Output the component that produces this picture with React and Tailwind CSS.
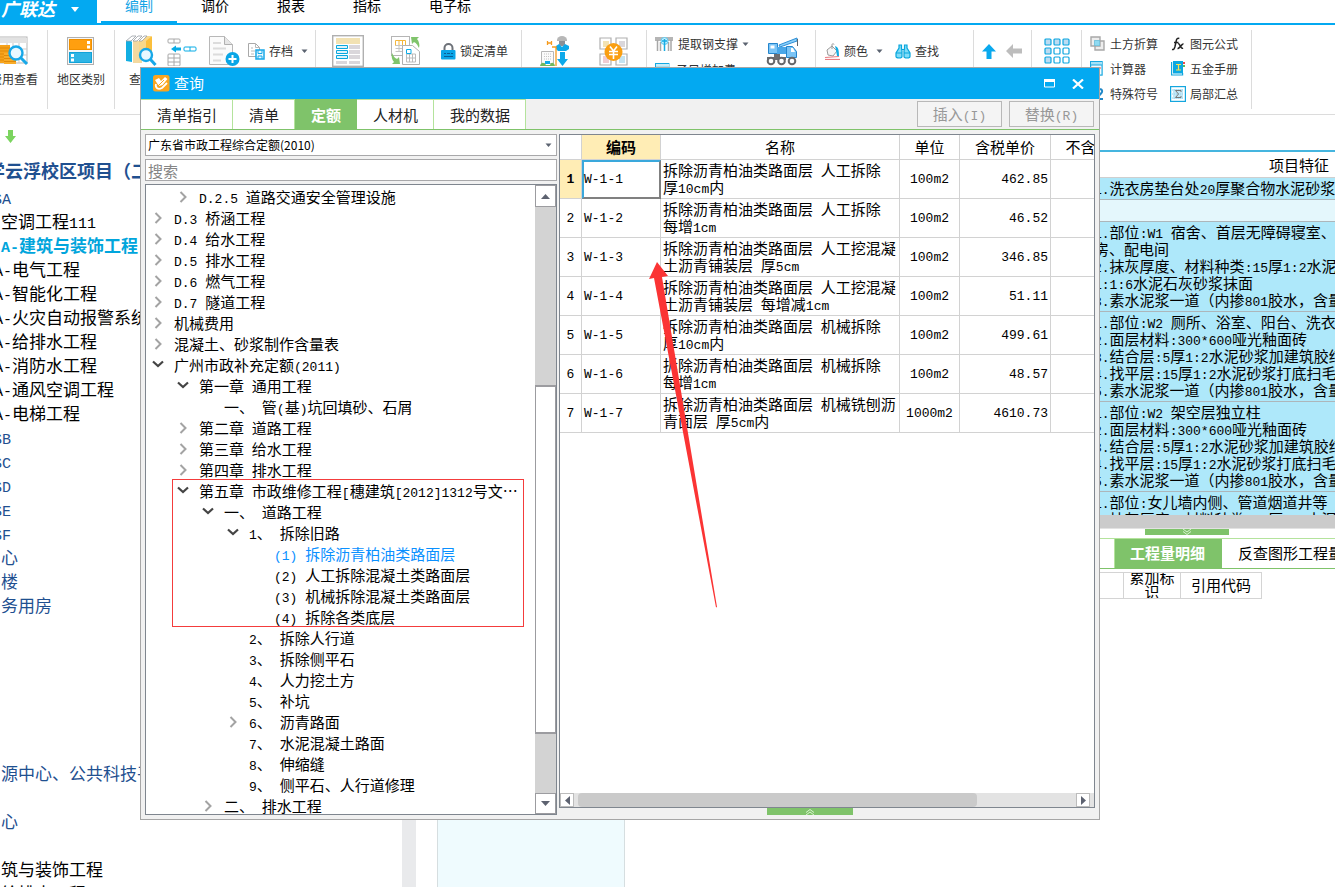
import React from "react";

const CJK = "font-['Noto_Sans_CJK_SC',sans-serif]";

/* Chinese text with its Latin runs set in a narrower monospace face. */
function T({ children, latin = "text-[13px]" }) {
  return children.split(/([\x20-\x7e]+)/).map((part, i) =>
    i % 2 ? (
      <span key={i} className={`font-['Liberation_Mono',monospace] leading-[0] ${latin}`}>{part}</span>
    ) : (
      part
    )
  );
}

function Caret({ className = "text-[#5b6370]" }) {
  return (
    <svg width="7" height="4" viewBox="0 0 7 4" className={`shrink-0 ${className}`} fill="currentColor">
      <path d="M0.5 0.5h6L3.5 4z" />
    </svg>
  );
}

/* ---------- ribbon icons ---------- */

const CostIcon = () => (
  <svg width="30" height="30" viewBox="0 0 30 30" fill="none">
    <rect x="-6" y="2" width="34" height="26" fill="#fff" stroke="#b5b5b5" />
    <path d="M-6 3h34v5h-34z" fill="#e2e2e2" />
    <path d="M-6 14h34M-6 20h34M8 8v20M14 8v20M20 8v20" stroke="#c9c9c9" />
    <path d="M0 10h11v18h-11z" fill="#f6a21b" />
    <path d="M0 13h11M0 16h11M0 19h11M0 22h11M0 25h11" stroke="#e08a08" />
    <path d="M5 18h12v11H5z" fill="#f8ab28" />
    <path d="M5 20.500h12M5 23.500h12M5 26.500h12" stroke="#e08a08" />
    <circle cx="17" cy="18" r="6.500" fill="#e9f8ff" stroke="#18a8e8" strokeWidth="2.400" />
    <path d="M21.500 22.500L28 29" stroke="#18a8e8" strokeWidth="3" />
  </svg>
);

const RegionIcon = () => (
  <svg width="27" height="30" viewBox="0 0 27 30" fill="none">
    <rect x=".5" y="2.500" width="26" height="27" fill="#f7f7f7" stroke="#b0b0b0" />
    <rect x="2.500" y="4.500" width="22" height="10" fill="#ff9f0f" stroke="#f09000" />
    <path d="M20 6h3v3h-3zM20 10.500h3v3h-3z" fill="#fff" />
    <rect x="2.500" y="17.500" width="22" height="10" fill="#2fb5e5" stroke="#12a2d8" />
    <path d="M4 19h3v3H4zM4 23.500h3v3H4z" fill="#fff" />
  </svg>
);

const BooksIcon = () => (
  <svg width="32" height="32" viewBox="0 0 32 32" fill="none">
    <path d="M1 6h5l1 1v20l-6-1z" fill="#12aee2" />
    <path d="M1 6l6-5h4L6 6z" fill="#fff" stroke="#9aa0a5" strokeWidth=".8" />
    <path d="M8 6h9v22H8z" fill="#f3d9a0" />
    <path d="M8 6l5-5h4l-5 5z" fill="#fff" stroke="#9aa0a5" strokeWidth=".8" />
    <path d="M14 6l5-5h7v24H14z" fill="#f8d88a" />
    <path d="M14 6l5-5h3l-5 5z" fill="#fff" stroke="#9aa0a5" strokeWidth=".8" />
    <path d="M21 6l6-5v22h-6z" fill="#fbbf3c" />
    <circle cx="21" cy="20" r="6" fill="#e9f8ff" stroke="#18a8e8" strokeWidth="2.400" />
    <path d="M25.500 24.500l5 5.500" stroke="#18a8e8" strokeWidth="3" />
  </svg>
);

const InsertRowIcon = () => (
  <svg width="30" height="30" viewBox="0 0 30 30" fill="none">
    <g stroke="#a8a8a8">
      <rect x="1" y="3" width="12" height="4" rx="1" />
      <path d="M7 3v4" />
      <rect x="1" y="18" width="12" height="12" rx="1" />
      <path d="M1 22h12M1 26h12M7 18v12" />
    </g>
    <path d="M4 13l5-3.500v2h5v3H9v2z" fill="#08ace6" />
    <rect x="17" y="11" width="12" height="4" rx="1" stroke="#08ace6" />
    <path d="M23 11v4" stroke="#08ace6" />
  </svg>
);

const NewDocIcon = () => (
  <svg width="31" height="32" viewBox="0 0 31 32" fill="none">
    <path d="M.5 1.500h15l8 8v20H.5z" fill="#fbfbfb" stroke="#b8b8b8" />
    <path d="M15.500 1.500v8h8" fill="#e6e6e6" stroke="#b0b0b0" />
    <path d="M4 8h8M4 13.500h13M4 19.500h10M4 25.500h8" stroke="#dcdcdc" strokeWidth="2" />
    <circle cx="23.500" cy="24" r="7" fill="#0aa6e6" />
    <path d="M23.500 20v8M19.500 24h8" stroke="#fff" strokeWidth="2" />
  </svg>
);

const ArchiveIcon = () => (
  <svg width="17" height="18" viewBox="0 0 17 18" fill="none">
    <path d="M.5 1.500h7l4 4v9H.5z" fill="#fff" stroke="#a9a9a9" />
    <path d="M7.500 1.500v4h4M3 6h2M3 9h4M3 12h3" stroke="#b9b9b9" />
    <rect x="8" y="8" width="8" height="9" fill="#e9f8ff" stroke="#18a8e8" strokeWidth="1.500" />
    <path d="M10 8v3.500h4V8M10 17v-3h4v3" stroke="#18a8e8" />
  </svg>
);

const FormIcon = () => (
  <svg width="32" height="32" viewBox="0 0 32 32" fill="none">
    <rect x=".7" y=".7" width="30.600" height="30.600" fill="#fff" stroke="#b0b0b0" strokeWidth="1.400" />
    <path d="M4 3h24v6H4z" fill="#f2e2b3" />
    <path d="M17 10h11v4H17zM17 15h11v4H17zM17 20h11v4H17zM4 26h11v3H4zM17 26h11v3H17z" fill="#dad7db" />
    <path d="M4.500 10.500h11v3h-11zM4.500 15.500h11v3h-11zM4.500 20.500h11v3h-11z" fill="#dff3fb" stroke="#0aa9dd" />
  </svg>
);

const SwapIcon = () => (
  <svg width="30" height="32" viewBox="0 0 30 32" fill="none">
    <rect x=".5" y="1.500" width="18" height="19" fill="#fff" stroke="#b5b5b5" />
    <path d="M4.500 5.500h10v5h-10zM8 5.500v5M11.500 5.500v5" stroke="#f4b73c" />
    <path d="M4.500 10.500h10v6h-10M4.500 13.500h10M8 10.500v6" stroke="#c4c4c4" />
    <path d="M11.500 10.500h10l7 6v13h-17z" fill="#fff" stroke="#b0b0b0" />
    <path d="M15.500 19h9v8h-9zM15.500 23h9M18.500 19v8M21.500 19v8" stroke="#bcbcbc" />
    <path d="M15.500 14.500h4.500v4h-4.500z" stroke="#0aace6" />
    <path d="M20 2h8l-2 2c2 2 3 6 2 9-2-4-3-5-5-6l-2 2z" fill="#80c46c" />
    <path d="M9 29H1l2-2c-2-2-3-6-2-9 2 4 3 5 5 6l2-2z" fill="#80c46c" />
  </svg>
);

const LockIcon = () => (
  <svg width="15" height="17" viewBox="0 0 15 17" fill="none">
    <path d="M3.500 8V5a4 4 0 018 0v3" stroke="#6d7178" strokeWidth="2" />
    <rect x="0" y="7" width="14.500" height="9.500" rx="1" fill="#0aa5e8" />
    <path d="M3 10.500h2M6 10.500h3M10 10.500h2M3 13.500h9" stroke="#075f98" />
  </svg>
);

const WorkerIcon = () => (
  <svg width="30" height="31" viewBox="0 0 30 31" fill="none">
    <path d="M17 4a5 4 0 0110 0v1H17z" fill="#b7b7b7" />
    <path d="M19 5h6v3a3 2 0 01-6 0z" fill="#8c9096" />
    <path d="M16 10l3-2 3 3 3-3 4 2v3l-3 2h-8l-2-2z" fill="#0ea9ea" />
    <path d="M20 16h5v7h3l-5.500 7-5.500-7h3z" fill="#0ea9ea" />
    <path d="M7.500 5v4M7.500 7h4M11.500 5v4M12 11h4v19" stroke="#f59a1d" strokeWidth="1.300" />
    <path d="M1.500 15.500h12v12h-12z" fill="#fafafa" stroke="#b5b5b5" />
    <path d="M4 18h8M4 20.500h8M4 23h8" stroke="#c4c4c4" strokeDasharray="1 1" />
    <path d="M0 30c1-4 4-4 6-1h4c1-3 4-3 5 1z" fill="#72b95c" />
    <path d="M5 25h5v3H5z" fill="#0ea9ea" />
  </svg>
);

const PriceIcon = () => (
  <svg width="30" height="31" viewBox="0 0 30 31" fill="none">
    <g stroke="#b0b0b0" strokeWidth="1.200">
      <path d="M1 2h11v11H1zM17 2h11v11H17zM1 18h11v11H1zM17 18h11v11H17z" fill="#fff" />
    </g>
    <path d="M4 5h6v6H4z" fill="#f2e2b3" />
    <path d="M20 5h6v6h-6z" fill="#dad7db" />
    <path d="M4 20h6v7H4z" fill="#f0cdd2" />
    <path d="M20 20h6v7h-6z" fill="#c4e3f1" />
    <circle cx="14.500" cy="16" r="9" fill="#fa9f12" />
    <path d="M11 10.500l3.500 4.500 3.500-4.500M10 15.500h9M10 18.500h9M14.500 15v8" stroke="#fff" strokeWidth="1.600" />
  </svg>
);

const SupportIcon = () => (
  <svg width="19" height="16" viewBox="0 0 19 16" fill="none">
    <path d="M0 1h18v4H0z" fill="#b5b5b5" />
    <path d="M2.500 4v11M5.500 6v9M13.500 6v9M16 4v11" stroke="#a8a8a8" strokeWidth="1.500" />
    <circle cx="9.500" cy="5" r="3.500" fill="#c7eefc" stroke="#5ccbf2" />
    <path d="M9.500 3v12M7 5h5" stroke="#16ace4" strokeWidth="1.500" />
  </svg>
);

const FeeIcon = () => (
  <svg width="15" height="14" viewBox="0 0 15 14" fill="none">
    <rect x=".7" y=".7" width="13" height="12" fill="#fff" stroke="#16a8e0" strokeWidth="1.400" />
    <path d="M1 1h13v4H1z" fill="#c8edf9" />
    <path d="M1 4.500h13" stroke="#16a8e0" strokeWidth="1.400" />
  </svg>
);

const CraneIcon = () => (
  <svg width="33" height="30" viewBox="0 0 33 30" fill="none">
    <path d="M13 9L31 2v3L14 11z" fill="#8cd0fa" stroke="#2d8fd6" />
    <path d="M31.500 3v7" stroke="#5c6670" />
    <path d="M2.500 7.500h9v10h-9z" fill="#7ac4f6" stroke="#2585cc" />
    <path d="M4.500 9.500h4v3h-4z" fill="#fff" />
    <path d="M11 11h9v7h-9z" fill="#4aa7e8" />
    <path d="M20.500 10.500h6l4 5v6h-10z" fill="#7ac4f6" stroke="#2585cc" />
    <path d="M25 12h2l2 4h-4z" fill="#fff" />
    <path d="M8 18h6v3H8zM1 21h19v3H1z" fill="#6d6d70" />
    <g fill="#fff" stroke="#67676a" strokeWidth="2">
      <circle cx="5" cy="25" r="3.300" />
      <circle cx="15.500" cy="25" r="3.300" />
      <circle cx="26" cy="25" r="3.300" />
    </g>
  </svg>
);

const PaintIcon = () => (
  <svg width="17" height="17" viewBox="0 0 17 17" fill="none">
    <path d="M3 7l5-4 5 5-4 5-5-1z" fill="#f6f6f6" stroke="#9a9a9a" />
    <path d="M8 6V1.500c0-1 2-1 2 0" stroke="#9a9a9a" />
    <path d="M11 3c3 1 4 3 4 10h-2l-1-6z" fill="#12abe2" />
    <path d="M1 14.500l14-1" stroke="#e87b80" strokeWidth="1.200" />
    <path d="M1 16.500h15" stroke="#e87b80" strokeWidth="1.200" />
  </svg>
);

const BinocularsIcon = () => (
  <svg width="16" height="15" viewBox="0 0 16 15" fill="none" stroke="#08a6dc" strokeWidth="1.200">
    <path d="M4 1h2.500v3L7 7v5.500c0 2-6 2-6 0V9l3-5z" fill="#7fdcf8" />
    <path d="M12 1H9.500v3L9 7v5.500c0 2 6 2 6 0V9l-3-5z" fill="#7fdcf8" />
    <path d="M6.500 5.500h3M1 9h6M9 9h6" />
  </svg>
);

const UpIcon = () => (
  <svg width="14" height="15" viewBox="0 0 14 15" fill="#0aa9ee">
    <path d="M7 0l7 7.500H9.500V15h-5V7.500H0z" />
  </svg>
);

const BackIcon = () => (
  <svg width="16" height="14" viewBox="0 0 16 14" fill="#bdbdbd">
    <path d="M0 7l7-7v4.500h9v5H7V14z" />
  </svg>
);

const GridIcon = () => (
  <svg width="26" height="26" viewBox="0 0 26 26" stroke="#0aa6e0" strokeWidth="1.200">
    {[1, 10, 19].map((y, r) =>
      [1, 10, 19].map((x, c) => (
        <rect key={x + "-" + y} x={x} y={y} width="6" height="6" rx="1" fill={r === 0 || c === 0 ? "#bcdcf2" : "#fff"} />
      ))
    )}
  </svg>
);

const EarthIcon = () => (
  <svg width="15" height="15" viewBox="0 0 15 15" fill="none">
    <path d="M1 1h9v9H1zM5 5h9v9H5z" fill="#ededed" stroke="#a8a8a8" strokeWidth="1.400" />
    <path d="M4.500 4.500h5v5h-5z" fill="#8edaf2" stroke="#4cc0e6" strokeDasharray="1 1" />
  </svg>
);

const CalcIcon = () => (
  <svg width="13" height="15" viewBox="0 0 13 15" fill="none">
    <rect x=".6" y=".6" width="11.500" height="13.500" fill="#f4fbfe" stroke="#18a8e0" strokeWidth="1.200" />
    <path d="M1 1h11v3H1z" fill="#a5e2f7" />
    <path d="M0 4h12" stroke="#18a8e0" />
    <path d="M8 6h3v2H8z" fill="#f6a2a2" />
  </svg>
);

const OmegaIcon = () => (
  <svg width="14" height="14" viewBox="0 0 14 14" fill="none" stroke="#2088c8" strokeWidth="2">
    <path d="M8 4c1-3 5-2 4 1-1 2-4 4-5 7h6" />
  </svg>
);

const FxIcon = () => (
  <svg width="14" height="14" viewBox="0 0 14 14" fill="none" stroke="#222" strokeWidth="1.500">
    <path d="M1 12.500c2 .5 2.500-1 3-3l1.300-6c.4-2 1.200-2.500 3-2M3 5.500h4.500" />
    <path d="M7 7c2-1.500 2.500 5.500 5 4M12.500 7c-2-.5-3.500 5-6 4.500" />
  </svg>
);

const HandbookIcon = () => (
  <svg width="14" height="15" viewBox="0 0 14 15" fill="none">
    <path d="M.6 1v13h11v-2" stroke="#12a6dc" strokeWidth="1.200" />
    <path d="M2 0h10v12.500H2z" fill="#0ba8e2" />
    <path d="M5 3.500h5M7.500 3.500v5.500M5 9h5" stroke="#ffe14a" strokeWidth="1.200" />
    <path d="M12 1h2v2h-2z" fill="#ef4b4b" />
    <path d="M12 4h2v2h-2z" fill="#5cba5a" />
  </svg>
);

const SumIcon = () => (
  <svg width="16" height="16" viewBox="0 0 16 16" fill="none">
    <rect x=".6" y=".6" width="14.800" height="14.800" fill="#fff" stroke="#14a6de" strokeWidth="1.200" />
    <path d="M3 3h10v10H3z" fill="#c3e7f6" />
    <path d="M2 4h12M2 8h12M2 12h12" stroke="#93d6f0" strokeDasharray="1 1" />
    <path d="M11 6V4.500H5.500L8.500 8l-3 3.500H11V10" stroke="#787878" />
  </svg>
);

/* ---------- page furniture ---------- */

const menus = ["调价", "报表", "指标"];

function Header() {
  return (
    <header className="flex h-[25px] shrink-0 border-b-2 border-[#03a9f1]">
      <button className="flex h-full w-[97px] shrink-0 items-start bg-[#03a9f1] pl-px text-[18px] font-bold leading-4 text-white italic">
        广联达
        <svg width="8" height="5" viewBox="0 0 8 5" className="mt-[7px] ml-4" fill="#fff"><path d="M0 0h8L4 5z" /></svg>
      </button>
      <nav className="-mt-[5px] ml-1 flex text-[14px] leading-5">
        <button className="flex h-[30px] w-[76px] justify-center border-b-4 border-[#03a9f1] text-[#18a5e6]">编制</button>
        {menus.map((m) => (
          <button key={m} className="flex w-[76px] justify-center text-black">{m}</button>
        ))}
        <button className="flex w-[90px] justify-center text-black">电子标</button>
      </nav>
    </header>
  );
}

function Group({ className = "", children }) {
  return <div className={`flex h-[79px] shrink-0 border-r border-[#dcdcdc] pt-[5px] ${className}`}>{children}</div>;
}

function Tool({ icon, label, caret, className = "" }) {
  return (
    <button className={`flex h-8 shrink-0 items-center whitespace-nowrap ${className}`} aria-label={label || "工具"}>
      {icon}
      {label && <span>{label}</span>}
      {caret && <Caret className="ml-1 text-[#5b6370]" />}
    </button>
  );
}

function Ribbon() {
  return (
    <div className="flex h-[90px] shrink-0 items-start border-b border-[#dcdcdc] pt-[5px] text-[12px] leading-[18px] text-[#333]">
      <Group className="w-12">
        <button className="-ml-2.5 flex h-14 w-12 shrink-0 flex-col items-center whitespace-nowrap">
          <CostIcon /><span className="mt-[5px]">费用查看</span>
        </button>
      </Group>
      <Group className="w-[67px] justify-center">
        <button className="flex h-14 flex-col items-center">
          <RegionIcon /><span className="mt-[5px]">地区类别</span>
        </button>
      </Group>
      <Group className="w-[201px] pl-2.5">
        <button className="flex h-14 w-8 flex-col items-center">
          <BooksIcon /><span className="mt-[3px]">查询</span>
        </button>
        <Tool icon={<InsertRowIcon />} className="ml-2.5" />
        <Tool icon={<NewDocIcon />} className="ml-3" />
        <Tool icon={<ArchiveIcon />} label="存档" caret className="ml-2 gap-1" />
      </Group>
      <Group className="w-[206px] pl-4">
        <Tool icon={<FormIcon />} />
        <Tool icon={<SwapIcon />} className="ml-[27px]" />
        <Tool icon={<LockIcon />} label="锁定清单" className="ml-5 gap-1" />
      </Group>
      <Group className="w-[125px] gap-[29px] pl-[18px]">
        <Tool icon={<WorkerIcon />} />
        <Tool icon={<PriceIcon />} />
      </Group>
      <Group className="w-[169px] pl-2">
        <div className="flex w-[111px] flex-col">
          <button className="flex h-[22px] shrink-0 items-center gap-1 whitespace-nowrap pb-1"><SupportIcon />提取钢支撑<Caret /></button>
          <button className="flex h-[25px] shrink-0 items-center gap-1.5 whitespace-nowrap"><FeeIcon />子目增加费</button>
        </div>
        <Tool icon={<CraneIcon />} />
      </Group>
      <Group className="w-[158px] pl-2">
        <Tool icon={<PaintIcon />} label="颜色" className="gap-[3px]" />
        <span className="flex h-8 items-center pl-2"><Caret /></span>
        <Tool icon={<BinocularsIcon />} label="查找" className="ml-3 gap-1" />
      </Group>
      <Group className="w-[58px] gap-2.5 pl-2">
        <Tool icon={<UpIcon />} />
        <Tool icon={<BackIcon />} />
      </Group>
      <Group className="w-[50px] justify-center">
        <Tool icon={<GridIcon />} />
      </Group>
      <Group className="w-[170px] gap-3 pl-2">
        <div className="-mt-1 flex flex-col">
          <button className="flex h-[25px] items-center gap-1"><span className="w-4"><EarthIcon /></span>土方折算</button>
          <button className="flex h-[25px] items-center gap-1"><span className="w-4"><CalcIcon /></span>计算器</button>
          <button className="flex h-[25px] items-center gap-1"><span className="w-4"><OmegaIcon /></span>特殊符号</button>
        </div>
        <div className="-mt-1 flex flex-col">
          <button className="flex h-[25px] items-center gap-1"><span className="flex w-4 justify-center"><FxIcon /></span>图元公式</button>
          <button className="flex h-[25px] items-center gap-1"><span className="flex w-4 justify-center"><HandbookIcon /></span>五金手册</button>
          <button className="flex h-[25px] items-center gap-1"><span className="flex w-4 justify-center"><SumIcon /></span>局部汇总</button>
        </div>
      </Group>
    </div>
  );
}

const project = [
  ["SA", "b", 1], ["空调工程111", "k", 2], ["A-建筑与装饰工程", "c", 2],
  ["SA-电气工程", "k", 0], ["SA-智能化工程", "k", 0], ["SA-火灾自动报警系统", "k", 0],
  ["SA-给排水工程", "k", 0], ["SA-消防水工程", "k", 0], ["SA-通风空调工程", "k", 0], ["SA-电梯工程", "k", 0],
  ["SB", "b", 1], ["SC", "b", 1], ["SD", "b", 1], ["SE", "b", 1], ["SF", "b", 1],
  ["心", "b", 2], ["楼", "b", 2], ["务用房", "b", 2],
  ["", "b", 2], ["", "b", 2], ["", "b", 2], ["", "b", 2], ["", "b", 2], ["", "b", 2],
  ["源中心、公共科技平台", "b", 2], ["", "b", 2], ["心", "b", 2], ["", "b", 2],
  ["筑与装饰工程", "k", 2], ["给排水工程", "k", 2],
];
const tone = { b: "text-[#1f5090]", k: "text-black", c: "font-bold text-[#00a5dc]" };
const shift = ["pl-0", "pl-2", "pl-4"];

function ProjectPanel() {
  return (
    <aside className="w-[402px] shrink-0 overflow-hidden">
      <div className="flex h-11 items-start pt-[15px] pl-[5px]">
        <svg width="11" height="13" viewBox="0 0 11 13" fill="#7bd45f"><path d="M3 0h5v6h3l-5.500 7L0 6h3z" /></svg>
      </div>
      <div className="-ml-[15px] whitespace-nowrap">
        <h2 className="h-[26px] pl-0.5 text-[18px] leading-[22px] font-bold text-[#1f5090]">学云浮校区项目（二期）</h2>
        <ul className="text-[17px] leading-6">
          {project.map(([t, c, s], i) => (
            <li key={i} className={`h-6 ${tone[c]} ${shift[s]}`}><T latin="text-[15px]">{t}</T></li>
          ))}
        </ul>
      </div>
    </aside>
  );
}

const features = [
  ["1.洗衣房垫台处20厚聚合物水泥砂浆"],
  [" "],
  ["1.部位:W1 宿舍、首层无障碍寝室、厨", "房、配电间", "2.抹灰厚度、材料种类:15厚1:2水泥砂", "1:1:6水泥石灰砂浆抹面", "3.素水泥浆一道（内掺801胶水，含量"],
  ["1.部位:W2 厕所、浴室、阳台、洗衣房", "2.面层材料:300*600哑光釉面砖", "3.结合层:5厚1:2水泥砂浆加建筑胶结", "4.找平层:15厚1:2水泥砂浆打底扫毛", "5.素水泥浆一道（内掺801胶水，含量"],
  ["1.部位:W2 架空层独立柱", "2.面层材料:300*600哑光釉面砖", "3.结合层:5厚1:2水泥砂浆加建筑胶结", "4.找平层:15厚1:2水泥砂浆打底扫毛", "5.素水泥浆一道（内掺801胶水，含量"],
  ["1.部位:女儿墙内侧、管道烟道井等", "2.抹灰厚度、材料种类:15厚1:2水泥砂"],
];

function WorkPanel() {
  return (
    <main className="flex min-w-0 flex-1 flex-col overflow-hidden">
      <div className="h-[35px] shrink-0" />
      <div className="h-[365px] shrink-0 overflow-hidden border-t-2 border-[#45b5df]">
        <table className="w-[1090px] table-fixed border-separate border-spacing-0 text-[15px] leading-[17px] whitespace-pre">
          <colgroup><col className="w-[676px]" /><col /></colgroup>
          <thead>
            <tr className="h-[26px]">
              <th className="border-b border-[#cfcfcf]" />
              <th className="border-b border-[#cfcfcf] text-center font-normal">项目特征</th>
            </tr>
          </thead>
          <tbody>
            {features.map((lines, i) => (
              <tr key={i} className={i === 1 ? "bg-[#e4f7fc]" : "bg-[#aee8fa]"}>
                <td className="border-b border-[#adb6ba]" />
                <td className="border-b border-[#adb6ba] px-0.5 pt-px pb-[3px]">
                  {lines.map((l, j) => <div key={j} className="h-[17px]"><T>{l}</T></div>)}
                </td>
              </tr>
            ))}
          </tbody>
        </table>
      </div>
      <div className="h-[14px] shrink-0 border-b border-[#e2e2e2] bg-[#cbcbcb]" />
      <div className="flex h-[9px] shrink-0 pl-[729px]">
        <button aria-label="收起" className="flex h-1.5 w-[84px] items-center justify-center bg-[#7fc36a]">
          <svg width="10" height="6" viewBox="0 0 10 6" fill="none" stroke="#d9f2cf"><path d="M1 0l4 3 4-3M1 2.500l4 3 4-3" /></svg>
        </button>
      </div>
      <div className="flex h-[31px] shrink-0 border-t border-b border-t-[#b4e39c] border-b-[#7fc36a] pl-[698px] text-[15px] whitespace-nowrap">
        <button className="w-[108px] shrink-0 border-l border-[#b4e39c] bg-[#7fc36a] pr-0.5 pb-px font-bold leading-6 text-white">工程量明细</button>
        <button className="shrink-0 px-4 pb-px leading-6">反查图形工程量</button>
      </div>
      <div className="flex shrink-0 pt-[3px] text-[15px] leading-[15px]">
        <div className="h-[27px] w-[708px] shrink-0 border border-[#d4d4d4]" />
        <div className="flex h-[27px] w-[57px] shrink-0 items-center justify-center overflow-hidden border-y border-r border-[#d4d4d4] px-1 pb-1 text-center">累加标识</div>
        <div className="flex h-[27px] w-[81px] shrink-0 items-center justify-center border-y border-r border-[#d4d4d4] pb-0.5">引用代码</div>
      </div>
      <div className="flex min-h-0 flex-1 pl-[21px]">
        <div className="w-[188px] border-x border-[#d6dee0] bg-[#effbfe]" />
      </div>
    </main>
  );
}

/* ---------- query dialog ---------- */

const tree = [
  [1, ">", "D.2.5 道路交通安全管理设施"], [0, ">", "D.3 桥涵工程"], [0, ">", "D.4 给水工程"],
  [0, ">", "D.5 排水工程"], [0, ">", "D.6 燃气工程"], [0, ">", "D.7 隧道工程"],
  [0, ">", "机械费用"], [0, ">", "混凝土、砂浆制作含量表"], [0, "v", "广州市政补充定额(2011)"],
  [1, "v", "第一章 通用工程"], [2, "", "一、 管(基)坑回填砂、石屑"], [1, ">", "第二章 道路工程"],
  [1, ">", "第三章 给水工程"], [1, ">", "第四章 排水工程"],
  [1, "v", "第五章 市政维修工程[穗建筑[2012]1312号文…"], [2, "v", "一、 道路工程"],
  [3, "v", "1、 拆除旧路"], [4, "", "(1) 拆除沥青柏油类路面层"], [4, "", "(2) 人工拆除混凝土类路面层"],
  [4, "", "(3) 机械拆除混凝土类路面层"], [4, "", "(4) 拆除各类底层"], [3, "", "2、 拆除人行道"],
  [3, "", "3、 拆除侧平石"], [3, "", "4、 人力挖土方"], [3, "", "5、 补坑"],
  [3, ">", "6、 沥青路面"], [3, "", "7、 水泥混凝土路面"], [3, "", "8、 伸缩缝"],
  [3, "", "9、 侧平石、人行道修理"], [2, ">", "二、 排水工程"],
];
const indent = ["pl-1", "pl-[29px]", "pl-[54px]", "pl-[79px]", "pl-[104px]"];

function Twisty({ kind }) {
  return (
    <span className="flex w-4 shrink-0 justify-center">
      {kind === ">" && (
        <svg width="9" height="12" viewBox="0 0 9 12" fill="none" stroke="#a3a3a3" strokeWidth="2"><path d="M1.500 1l5 5-5 5" /></svg>
      )}
      {kind === "v" && (
        <svg width="12" height="9" viewBox="0 0 12 9" fill="none" stroke="#444" strokeWidth="2.200"><path d="M1 1.500l5 4.500 5-4.500" /></svg>
      )}
    </span>
  );
}

function QuotaTree() {
  return (
    <div className="flex min-h-0 flex-1 border border-[#7f868f] bg-white">
      <ul className="min-w-0 flex-1 overflow-hidden pt-px text-[15px] leading-[21px]">
        {tree.map(([lv, kind, t], i) => (
          <li key={i} className={`flex h-[21px] items-center gap-2 whitespace-pre ${indent[lv]} ${i === 17 ? "text-[#0a90ff]" : "text-black"}`}>
            <Twisty kind={kind} />
            <span><T>{t}</T></span>
          </li>
        ))}
      </ul>
      <div className="flex w-[21px] shrink-0 flex-col bg-[#d3d3d3]">
        <button aria-label="向上" className="flex h-[22px] items-center justify-center border border-[#9c9ca0] bg-white">
          <svg width="9" height="5" viewBox="0 0 9 5" fill="#5d6270"><path d="M0 5h9L4.500 0z" /></svg>
        </button>
        <div className="mt-[178px] h-[349px] border border-t-2 border-b-2 border-[#9c9ca0] bg-white" />
        <button aria-label="向下" className="mt-auto flex h-[21px] items-center justify-center border border-[#9c9ca0] bg-white">
          <svg width="9" height="5" viewBox="0 0 9 5" fill="#5d6270"><path d="M0 0h9L4.500 5z" /></svg>
        </button>
      </div>
    </div>
  );
}

const items = [
  ["W-1-1", "拆除沥青柏油类路面层 人工拆除\n厚10cm内", "100m2", "462.85"],
  ["W-1-2", "拆除沥青柏油类路面层 人工拆除\n每增1cm", "100m2", "46.52"],
  ["W-1-3", "拆除沥青柏油类路面层 人工挖混凝\n土沥青铺装层 厚5cm", "100m2", "346.85"],
  ["W-1-4", "拆除沥青柏油类路面层 人工挖混凝\n土沥青铺装层 每增减1cm", "100m2", "51.11"],
  ["W-1-5", "拆除沥青柏油类路面层 机械拆除\n厚10cm内", "100m2", "499.61"],
  ["W-1-6", "拆除沥青柏油类路面层 机械拆除\n每增1cm", "100m2", "48.57"],
  ["W-1-7", "拆除沥青柏油类路面层 机械铣刨沥\n青面层 厚5cm内", "1000m2", "4610.73"],
];
const cell = "border-r border-b border-[#d2d2d2]";
const mono = "font-['Liberation_Mono',monospace] text-[13px]";

function QuotaGrid() {
  return (
    <div className="flex min-h-0 flex-1 flex-col overflow-hidden border border-[#7f868f] bg-white">
      <div className="min-h-0 flex-1 overflow-hidden">
        <table className="w-[596px] table-fixed border-separate border-spacing-0 text-[15px] leading-[17px]">
          <colgroup>
            <col className="w-[22px]" /><col className="w-[79px]" /><col className="w-[239px]" />
            <col className="w-[60px]" /><col className="w-[91px]" /><col className="w-[105px]" />
          </colgroup>
          <thead>
            <tr className="h-[25px]">
              <th className={cell} />
              <th className={`${cell} bg-[#ffedb5] px-0 pt-0 pb-0.5 font-bold`}>编码</th>
              {["名称", "单位", "含税单价", "不含税单价"].map((h) => (
                <th key={h} className={`${cell} px-0 pt-0 pb-0.5 font-normal`}>{h}</th>
              ))}
            </tr>
          </thead>
          <tbody>
            {items.map(([code, name, unit, price], i) => (
              <tr key={code} className="h-[39px]">
                <th className={`${cell} ${mono} p-0 ${i === 0 ? "bg-[#ffedb5] font-bold" : "font-normal"}`}>{i + 1}</th>
                <td className={`${mono} py-0 pr-0 ${i === 0 ? "border-2 border-t-[#3aa8dc] border-r-[#808080] border-b-[#808080] border-l-[#3aa8dc] pl-0" : cell + " pl-0.5"}`}>{code}</td>
                <td className={`${cell} pt-0 pr-0 pb-0.5 pl-0.5 whitespace-pre`}><T>{name}</T></td>
                <td className={`${cell} ${mono} p-0 text-center`}>{unit}</td>
                <td className={`${cell} ${mono} py-0 pr-0.5 pl-0 text-right`}>{price}</td>
                <td className={cell} />
              </tr>
            ))}
          </tbody>
        </table>
      </div>
      <div className="flex h-[14px] shrink-0 bg-[#e3e3e3] pr-1">
        <button aria-label="向左" className="flex w-[14px] items-center justify-center border border-[#bcbcbc] bg-white">
          <svg width="5" height="9" viewBox="0 0 5 9" fill="#5d6270"><path d="M5 0v9L0 4.500z" /></svg>
        </button>
        <div className="ml-1 w-[399px] rounded-sm bg-[#cacaca]" />
        <button aria-label="向右" className="ml-auto flex w-[14px] items-center justify-center border border-[#bcbcbc] bg-white">
          <svg width="5" height="9" viewBox="0 0 5 9" fill="#5d6270"><path d="M0 0v9l5-4.500z" /></svg>
        </button>
      </div>
    </div>
  );
}

const tabs = ["清单指引", "清单", "定额", "人材机", "我的数据"];

function QueryDialog() {
  return (
    <section role="dialog" aria-label="查询" className="absolute top-[67px] left-[140px] flex h-[753px] w-[960px] flex-col border border-[#a6a6a6] bg-[#f1f1f1]">
      <div className="flex h-[31px] shrink-0 items-center bg-[#03a9f1] pr-[15px] pl-3 text-[15px] text-white">
        <svg width="17" height="17" viewBox="0 0 17 17" fill="none">
          <rect width="16.500" height="16.500" rx="2.500" fill="#f9a51f" />
          <path d="M2 5l4-2 2 3 4-4 2.500 2-5 6-3 1-2-2z" fill="#fff" />
          <path d="M3 9c-1 4 2 6 6 4l5-5" stroke="#fff" strokeWidth="1.800" />
          <path d="M5 11l6-6" stroke="#f9a51f" />
        </svg>
        <h1 className="ml-1 flex-1">查询</h1>
        <button aria-label="最大化" className="mr-[17px]">
          <svg width="11" height="9" viewBox="0 0 11 9" fill="none" stroke="#fff"><path d="M.5 1h10v7H.5z" /><path d="M0 1.500h11" strokeWidth="3" /></svg>
        </button>
        <button aria-label="关闭">
          <svg width="12" height="10" viewBox="0 0 12 10" fill="none" stroke="#fff" strokeWidth="2.200"><path d="M1 .5l10 9M11 .5l-10 9" /></svg>
        </button>
      </div>
      <div className="flex h-[31px] shrink-0 items-center border-b border-[#7fc36a] pr-[5px] text-[15px]">
        {tabs.map((t) => (
          <button key={t} className={`h-full border-t border-r pr-[15px] pl-4 leading-[29px] ${t === "定额" ? "border-[#7fc36a] bg-[#7fc36a] font-bold text-white" : "border-[#b4e39c] bg-white text-[#222]"}`}>{t}</button>
        ))}
        <div className="flex-1" />
        <button disabled className="mr-[7px] h-[26px] w-[85px] border border-[#b8b8b8] bg-[#f4f4f4] text-[#989898]"><T>插入(I)</T></button>
        <button disabled className="h-[26px] w-[85px] border border-[#b8b8b8] bg-[#f4f4f4] text-[#989898]"><T>替换(R)</T></button>
      </div>
      <div className="flex min-h-0 flex-1 gap-0.5 px-1 pt-1">
        <div className="flex w-[412px] shrink-0 flex-col gap-[3px] pb-1">
          <div className="flex h-[22px] shrink-0 items-center border border-[#a8a8aa] bg-white pr-1">
            <select aria-label="定额库" className="h-full min-w-0 flex-1 appearance-none bg-white pl-0.5 text-[12px] leading-5 outline-none">
              <option>广东省市政工程综合定额(2010)</option>
            </select>
            <Caret />
          </div>
          <input aria-label="搜索" placeholder="搜索" className="h-[22px] shrink-0 border border-[#a8a8aa] bg-white px-0.5 text-[15px] leading-5 outline-none placeholder:text-[#858585]" />
          <QuotaTree />
        </div>
        <div className="flex min-w-0 flex-1 flex-col">
          <QuotaGrid />
          <div className="flex h-[11px] shrink-0 pl-[208px]">
            <button aria-label="展开" className="flex h-[7px] w-[86px] items-center justify-center bg-[#7fc36a]">
              <svg width="10" height="6" viewBox="0 0 10 6" fill="none" stroke="#d9f2cf"><path d="M1 3.500l4-3 4 3M1 6l4-3 4 3" /></svg>
            </button>
          </div>
        </div>
      </div>
    </section>
  );
}

function Annotations() {
  return (
    <>
      <div className="pointer-events-none absolute top-[479px] left-[172px] h-[148px] w-[352px] border border-[#f43c3c]" />
      <svg className="pointer-events-none absolute top-[258px] left-[640px]" width="90" height="352" viewBox="0 0 90 352" fill="#fb3434">
        <path d="M17 4l-8 17 5-1L76 349.500l1-.5L22 19l6-1z" />
      </svg>
    </>
  );
}

export default function App() {
  return (
    <div lang="zh-CN" className={`relative flex h-screen flex-col overflow-hidden bg-white text-black ${CJK}`}>
      <Header />
      <Ribbon />
      <div className="flex min-h-0 flex-1">
        <ProjectPanel />
        <div className="w-[14px] shrink-0 bg-[#e9eaec]" />
        <WorkPanel />
      </div>
      <QueryDialog />
      <Annotations />
    </div>
  );
}
